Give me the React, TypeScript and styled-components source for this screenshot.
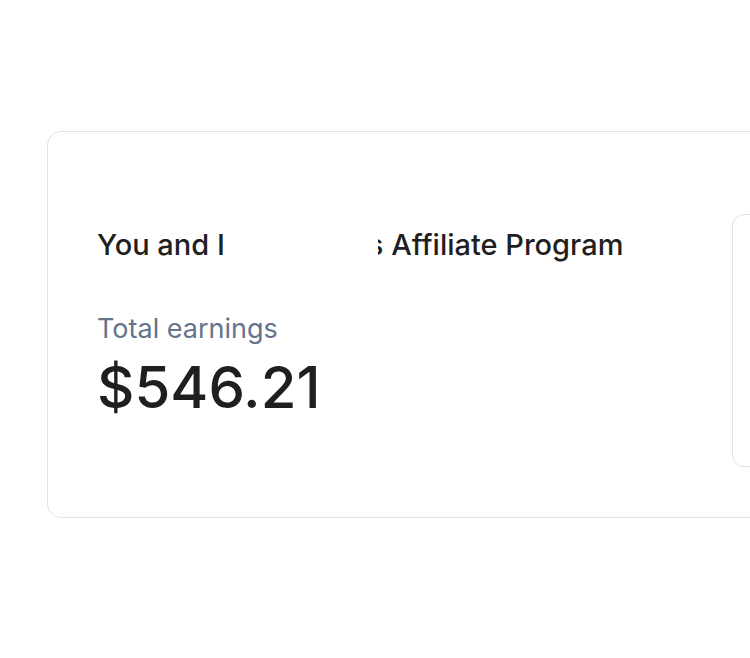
import React from 'react';
import styled, { createGlobalStyle } from 'styled-components';

const GlobalStyle = createGlobalStyle`
    html, body {
        margin: 0;
        padding: 0;
        background: #ffffff;
        overflow: hidden;
    }
    body {
        font-family: Inter, "Noto Sans", "Liberation Sans", sans-serif;
        -webkit-font-smoothing: antialiased;
    }
`;

const Page = styled.div`
    width: 750px;
    height: 658px;
    overflow: hidden;
    padding: 131px 0 0 47px;
    box-sizing: border-box;
`;

const Card = styled.section`
    display: grid;
    grid-template-columns: 635px 1fr;
    width: 1100px;
    height: 387px;
    box-sizing: border-box;
    padding: 82px 0 50px 49px;
    border: 1px solid #e0e3ea;
    border-radius: 14px;
    background: #ffffff;
`;

const Summary = styled.div`
    display: flex;
    flex-direction: column;
    padding-top: 15px;
`;

const Title = styled.h1`
    margin: 0 0 48px;
    color: #1f1f22;
    font-size: 29px;
    font-weight: 500;
    line-height: 32px;
    white-space: nowrap;
`;

const Redacted = styled.span`
    position: relative;
    z-index: 1;
    display: inline-block;
    width: 153px;
    height: 36px;
    margin-right: -10px;
    vertical-align: middle;
    background: #ffffff;
`;

const Label = styled.div`
    color: #64748b;
    font-size: 27px;
    font-weight: 400;
    line-height: 32px;
`;

const Amount = styled.div`
    margin-top: 12px;
    color: #1f1f22;
    font-size: 58px;
    font-weight: 500;
    line-height: 60px;
`;

const SidePanel = styled.div`
    border: 1px solid #e0e3ea;
    border-radius: 12px;
    background: #ffffff;
`;

export default function App() {
    return (
        <>
            <GlobalStyle />
            <Page>
                <Card>
                    <Summary>
                        <Title>
                            You and I<Redacted />s Affiliate Program
                        </Title>
                        <Label>Total earnings</Label>
                        <Amount>$546.21</Amount>
                    </Summary>
                    <SidePanel />
                </Card>
            </Page>
        </>
    );
}
